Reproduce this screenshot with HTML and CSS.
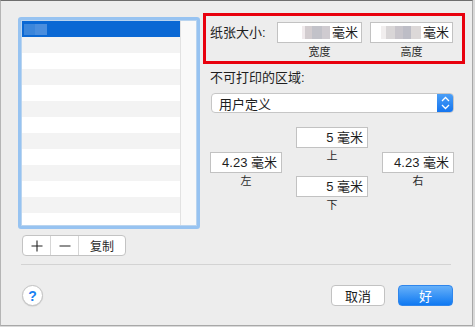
FILE: index.html
```html
<!DOCTYPE html>
<html lang="zh">
<head>
<meta charset="utf-8">
<link rel="stylesheet" href="styles.css">
</head>
<body>
<div class="window">
  <div class="main">
    <div class="left">
      <div class="ring">
        <div class="list">
          <div class="rows">
            <div class="row sel"><span class="blur-sel"></span></div>
            <div class="row alt"></div>
            <div class="row"></div>
            <div class="row alt"></div>
            <div class="row"></div>
            <div class="row alt"></div>
            <div class="row"></div>
            <div class="row alt"></div>
            <div class="row"></div>
            <div class="row alt"></div>
            <div class="row"></div>
            <div class="row alt"></div>
            <div class="row"></div>
          </div>
          <div class="scroll"></div>
        </div>
      </div>
      <div class="seg">
        <span class="seg-btn seg-icon"><svg width="12" height="12" viewBox="0 0 12 12"><path d="M6 0.5V11.5M0.5 6H11.5" stroke="#222" stroke-width="1.1" fill="none"/></svg></span>
        <span class="seg-btn seg-icon"><svg width="12" height="12" viewBox="0 0 12 12"><path d="M0.5 6H11.5" stroke="#222" stroke-width="1.1" fill="none"/></svg></span>
        <span class="seg-btn seg-text">复制</span>
      </div>
    </div>
    <div class="right">
      <div class="paper">
        <div class="paper-label">纸张大小:</div>
        <div class="fgroup">
          <div class="field w1"><span class="blur b1"></span>毫米</div>
          <div class="cap">宽度</div>
        </div>
        <div class="fgroup">
          <div class="field w2"><span class="blur b2"></span>毫米</div>
          <div class="cap">高度</div>
        </div>
      </div>
      <div class="np-label">不可打印的区域:</div>
      <div class="popup">
        <span class="popup-text">用户定义</span>
        <span class="stepper"><svg width="9" height="14" viewBox="0 0 9 14"><path d="M1 5L4.5 1.5L8 5M1 9L4.5 12.5L8 9" stroke="#fff" stroke-width="1.3" fill="none"/></svg></span>
      </div>
      <div class="margins">
        <div class="mcol side">
          <div class="field m">4.23 毫米</div>
          <div class="mcap">左</div>
        </div>
        <div class="mcol">
          <div class="field m">5 毫米</div>
          <div class="mcap">上</div>
          <div class="field m bottom">5 毫米</div>
          <div class="mcap">下</div>
        </div>
        <div class="mcol side">
          <div class="field m">4.23 毫米</div>
          <div class="mcap">右</div>
        </div>
      </div>
    </div>
  </div>
  <div class="sep"></div>
  <div class="footer">
    <div class="help">?</div>
    <div class="spacer"></div>
    <div class="btn cancel">取消</div>
    <div class="btn ok">好</div>
  </div>
</div>
</body>
</html>
```

FILE: styles.css
```css
html, body {
  margin: 0;
  padding: 0;
}
body {
  width: 475px;
  height: 327px;
  background: #d9d9d9;
  font-family: "Liberation Sans", "Noto Sans CJK SC", sans-serif;
  color: #1e1e1e;
  overflow: hidden;
}
.window {
  box-sizing: border-box;
  width: 473px;
  height: 326px;
  background: #ededed;
  border-top: 1px solid #6e6e6e;
  border-left: 1px solid #b5b5b5;
  border-right: 1px solid #a8a8a8;
  border-bottom: 1px solid #a8a8a8;
  display: flex;
  flex-direction: column;
}
.main {
  display: flex;
  align-items: flex-start;
  padding-top: 12px;
  height: 251px;
  box-sizing: border-box;
}
.left {
  margin-left: 17px;
  margin-top: 4px;
  width: 182px;
}
.ring {
  box-sizing: border-box;
  width: 182px;
  height: 212px;
  border: 3px solid #97c3f1;
  border-radius: 3px;
  background: #b9d4ef;
  padding: 1px;
}
.list {
  display: flex;
  height: 204px;
  background: #fff;
  overflow: hidden;
}
.rows {
  width: 159px;
}
.row {
  height: 16px;
  background: #fff;
}
.row.alt {
  background: #f3f3f3;
}
.row.sel {
  background: #0a68d4;
  display: flex;
  align-items: center;
}
.blur-sel {
  display: block;
  margin-left: 2px;
  width: 23px;
  height: 11px;
  background: linear-gradient(90deg, #3b86db 0 50%, #4a8ede 50% 100%);
}
.scroll {
  width: 15px;
  height: 204px;
  background: #f9f9f9;
  border-left: 1px solid #e2e2e2;
}
.seg {
  display: flex;
  margin-top: 6px;
  margin-left: 4px;
  width: 104px;
  height: 21px;
  box-sizing: border-box;
  border: 1px solid #c3c3c3;
  border-radius: 4px;
  background: #fff;
  overflow: hidden;
}
.seg-btn {
  display: flex;
  align-items: center;
  justify-content: center;
  height: 100%;
}
.seg-icon {
  width: 27px;
  border-right: 1px solid #d6d6d6;
}
.seg-text {
  flex: 1;
  font-size: 12px;
  color: #2a2a2a;
}
.right {
  margin-left: 3px;
  width: 262px;
}
.paper {
  box-sizing: border-box;
  width: 262px;
  height: 51px;
  border: 3px solid #e8000d;
  display: flex;
  align-items: flex-start;
  padding: 6px 0 0 4px;
}
.paper-label {
  font-size: 13px;
  line-height: 21px;
  width: 67px;
}
.fgroup {
  display: flex;
  flex-direction: column;
  align-items: center;
  margin-right: 8px;
}
.field {
  box-sizing: border-box;
  height: 21px;
  background: #fff;
  border: 1px solid #c2c2c2;
  font-size: 13px;
  line-height: 19px;
  display: flex;
  align-items: center;
  justify-content: flex-end;
  padding-right: 3px;
  color: #1e1e1e;
}
.w1 { width: 85px; }
.w2 { width: 83px; }
.blur {
  display: block;
  height: 13px;
  margin-right: 2px;
}
.b1 {
  width: 28px;
  background: linear-gradient(90deg, #f0eaec 0 10%, #d2cccf 10% 35%, #c2c2c9 35% 70%, #cfcbd0 70% 100%);
}
.b2 {
  width: 40px;
  background: linear-gradient(90deg, #f1eeee 0 12%, #d9d6d7 12% 35%, #c8c5cb 35% 55%, #bdbdc6 55% 75%, #dcd8d8 75% 100%);
}
.cap {
  font-size: 11px;
  line-height: 14px;
  margin-top: 2px;
  color: #2a2a2a;
}
.np-label {
  font-size: 13px;
  line-height: 16px;
  margin-top: 6px;
  padding-left: 7px;
}
.popup {
  box-sizing: border-box;
  margin-top: 7px;
  margin-left: 8px;
  width: 243px;
  height: 20px;
  background: #fff;
  border: 1px solid #c6c6c6;
  border-radius: 4px;
  display: flex;
  align-items: center;
  overflow: hidden;
}
.popup-text {
  flex: 1;
  font-size: 13px;
  padding-left: 7px;
}
.stepper {
  width: 17px;
  height: 20px;
  margin-right: -1px;
  background: linear-gradient(#4ea1f7, #1273ef);
  display: flex;
  align-items: center;
  justify-content: center;
}
.margins {
  display: flex;
  margin-top: 14px;
  margin-left: 7px;
  gap: 14px;
}
.mcol {
  display: flex;
  flex-direction: column;
  align-items: center;
  width: 72px;
}
.mcol.side {
  margin-top: 25px;
}
.field.m {
  width: 72px;
  padding-right: 4px;
}
.mcap {
  font-size: 11px;
  line-height: 16px;
  color: #2a2a2a;
}
.field.bottom {
  margin-top: 12px;
}
.sep {
  margin: 12px 21px 0 20px;
  height: 1px;
  background: #d3d3d3;
}
.footer {
  display: flex;
  align-items: center;
  padding: 20px 19px 0 21px;
}
.help {
  box-sizing: border-box;
  width: 21px;
  height: 21px;
  border-radius: 50%;
  background: #fff;
  border: 1px solid #c4c4c4;
  box-shadow: 0 0.5px 1px rgba(0,0,0,0.15);
  color: #1a82f2;
  font-size: 14px;
  font-weight: bold;
  display: flex;
  align-items: center;
  justify-content: center;
  line-height: 1;
}
.spacer {
  flex: 1;
}
.btn {
  box-sizing: border-box;
  height: 21px;
  border-radius: 4px;
  font-size: 13px;
  display: flex;
  align-items: center;
  justify-content: center;
}
.cancel {
  width: 54px;
  background: #fff;
  border: 1px solid #c2c2c2;
  color: #1e1e1e;
  margin-right: 13px;
}
.ok {
  width: 55px;
  background: linear-gradient(#66b0f9, #0f79f2);
  border: 1px solid #2f86ec;
  color: #fff;
}
```
